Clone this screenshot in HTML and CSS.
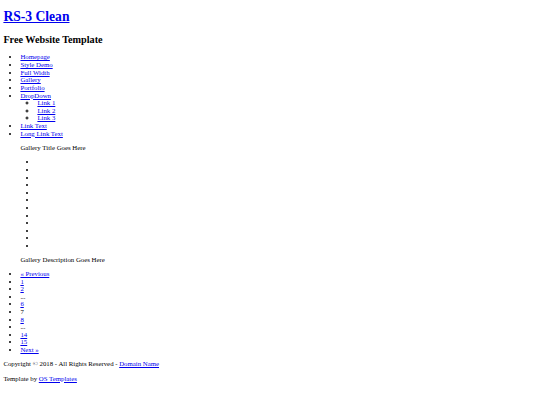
FILE: index.html
```html
<!DOCTYPE html>
<html lang="en">
<head>
  <meta charset="UTF-8">
  <meta name="viewport" content="width=device-width, initial-scale=1.0">
  <title>RS-3 Clean</title>
  <link rel="stylesheet" href="styles.css">
</head>
<body>

  <header>
    <h1><a href="#">RS-3 Clean</a></h1>
    <h2>Free Website Template</h2>
  </header>

  <nav>
    <ul>
      <li><a href="#">Homepage</a></li>
      <li><a href="#">Style Demo</a></li>
      <li><a href="#">Full Width</a></li>
      <li><a href="#">Gallery</a></li>
      <li><a href="#">Portfolio</a></li>
      <li><a href="#">DropDown</a>
        <ul>
          <li><a href="#">Link 1</a></li>
          <li><a href="#">Link 2</a></li>
          <li><a href="#">Link 3</a></li>
        </ul>
      </li>
      <li><a href="#">Link Text</a></li>
      <li><a href="#">Long Link Text</a></li>
    </ul>
  </nav>

  <figure class="gallery">
    <p>Gallery Title Goes Here</p>
    <ul>
      <li>&nbsp;</li>
      <li>&nbsp;</li>
      <li>&nbsp;</li>
      <li>&nbsp;</li>
      <li>&nbsp;</li>
      <li>&nbsp;</li>
      <li>&nbsp;</li>
      <li>&nbsp;</li>
      <li>&nbsp;</li>
      <li>&nbsp;</li>
      <li>&nbsp;</li>
      <li>&nbsp;</li>
    </ul>
    <figcaption>Gallery Description Goes Here</figcaption>
  </figure>

  <ul class="pagination">
    <li><a href="#">&laquo; Previous</a></li>
    <li><a href="#">1</a></li>
    <li><a href="#">2</a></li>
    <li>...</li>
    <li><a href="#">6</a></li>
    <li>7</li>
    <li><a href="#">8</a></li>
    <li>...</li>
    <li><a href="#">14</a></li>
    <li><a href="#">15</a></li>
    <li><a href="#">Next &raquo;</a></li>
  </ul>

  <footer>
    <p>Copyright &copy; 2018 - All Rights Reserved - <a href="#">Domain Name</a></p>
    <p>Template by <a href="#">OS Templates</a></p>
  </footer>

</body>
</html>
```

FILE: styles.css
```css
body {
  font-family: 'Liberation Serif', 'Times New Roman', serif;
  font-size: 6.8px;
  line-height: 1.12;
  margin: 3.4px;
  color: #000;
}

a {
  color: #0000ee;
}

header h1 {
  margin: 6px 0 9px;
}

ul {
  padding-left: 17px;
}

ul ul {
  list-style-type: circle;
}

.gallery {
  margin: 6.8px 17px;
}

.gallery ul {
  margin-bottom: 5.8px;
}
```
